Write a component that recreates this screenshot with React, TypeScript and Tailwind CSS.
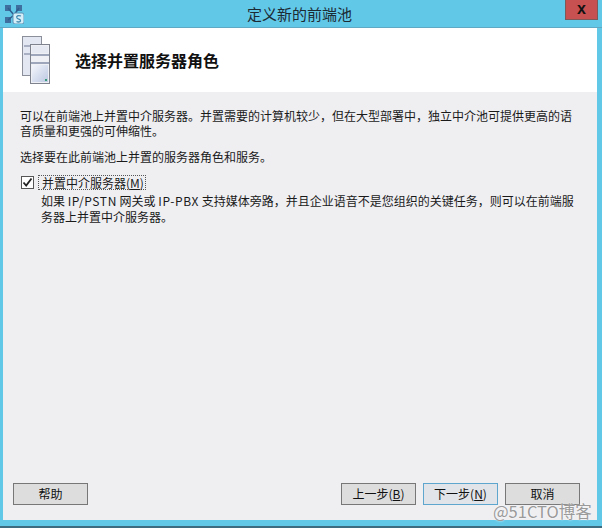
const font = { fontFamily: '"Noto Sans CJK SC", "Liberation Sans", sans-serif' };

const AppIcon = () => (
  <svg width="20" height="20" viewBox="0 0 20 20">
    <rect x="1" y="1" width="6" height="6" fill="#3f6f9f" />
    <rect x="12" y="1" width="6" height="6" fill="#3f6f9f" />
    <rect x="1" y="13" width="6" height="6" fill="#3f6f9f" />
    <path d="M4 4 L10 11 L15 4 M4 16 L10 11" stroke="#2f5f8f" strokeWidth="1.5" fill="none" />
    <rect x="9" y="9" width="11" height="11" rx="2" fill="#d5eef8" stroke="#5a93b5" />
    <path d="M17 12 C14 11 12 12 13 14 C14 15.5 17 15 16.5 17 C16 18.5 13.5 18 12.5 17.5" stroke="#3c86ae" strokeWidth="1.3" fill="none" />
  </svg>
);

const ServerIcon = () => (
  <svg width="30" height="49" viewBox="0 0 30 49">
    <defs>
      <linearGradient id="panel" x1="0" y1="0" x2="1" y2="1">
        <stop offset="0" stopColor="#f4f6fb" />
        <stop offset="1" stopColor="#bcc8e2" />
      </linearGradient>
    </defs>
    <rect x="0.5" y="0.5" width="19" height="39" fill="#e3e7f1" stroke="#8a8f9a" />
    <rect x="2" y="9" width="16" height="2" fill="#a9b0c4" />
    <rect x="2" y="17" width="16" height="2" fill="#a9b0c4" />
    <rect x="8.5" y="8.5" width="19" height="39" fill="#eef0f6" stroke="#7d828c" />
    <rect x="10" y="10" width="16" height="7" fill="#e6e9f2" />
    <rect x="9" y="18" width="18" height="2" fill="#9ea6bb" />
    <rect x="9" y="26" width="18" height="2" fill="#9ea6bb" />
    <rect x="10" y="29" width="16" height="17" fill="url(#panel)" />
    <rect x="23" y="43" width="2" height="2" fill="#3a9a7c" />
  </svg>
);

const Button = ({ label, hot, primary }: { label: string; hot?: string; primary?: boolean }) => (
  <button
    className={`w-[75px] h-[22px] flex items-center justify-center text-[12px] text-[#111] border ${
      primary ? "border-[#5fa6cf] bg-[#e1e4e8]" : "border-[#777] bg-[#dddddd]"
    }`}
  >
    {label}
    {hot && (
      <span>
        (<span className="underline">{hot}</span>)
      </span>
    )}
  </button>
);

export default function App() {
  return (
    <div className="relative w-[602px] h-[528px] overflow-hidden flex flex-col bg-[#62c8e8]" style={font}>
      {/* title bar */}
      <div className="relative h-[28px] shrink-0 flex items-center justify-center border-b border-[#5fa9c4]">
        <div className="absolute left-[4px] top-[4px]">
          <AppIcon />
        </div>
        <span className="text-[15px] leading-[20px] text-[#1c2a33] mr-[3px]">定义新的前端池</span>
        <div className="absolute left-[565px] top-0 w-[33px] h-[20px] bg-[#c75050] border border-[#7d5a5a] border-t-0 flex items-center justify-center">
          <span className="text-[16px] font-bold text-[#111] leading-none mb-[2px]" style={{ fontFamily: '"Liberation Sans", sans-serif' }}>
            x
          </span>
        </div>
      </div>

      {/* client area */}
      <div className="ml-[3px] mr-[5px] h-[492px] shrink-0 flex flex-col bg-[#efeff2] text-[#1a1a1a]">
        <div className="h-[64px] shrink-0 bg-white flex items-center pl-[19px]">
          <ServerIcon />
          <h1 className="ml-[23px] text-[16px] font-bold text-[#111]">选择并置服务器角色</h1>
        </div>

        <div className="flex-1 pl-[17px] pr-[20px] pt-[16px] text-[12px] leading-[15px]">
          <p>可以在前端池上并置中介服务器。并置需要的计算机较少，但在大型部署中，独立中介池可提供更高的语音质量和更强的可伸缩性。</p>
          <p className="mt-[11px]">选择要在此前端池上并置的服务器角色和服务。</p>
          <div className="mt-[11px] flex items-center h-[15px]">
            <div className="ml-[1px] w-[13px] h-[13px] bg-white border border-[#555] flex items-center justify-center">
              <svg width="11" height="11" viewBox="0 0 11 11">
                <path d="M1.5 5.5 L4.2 8.5 L9.5 1.5" stroke="#222" strokeWidth="1.8" fill="none" />
              </svg>
            </div>
            <span className="ml-[4px] pl-[3px] pr-[1px] border border-dotted border-[#555] leading-[13px]">
              并置中介服务器(<span className="underline">M</span>)
            </span>
          </div>
          <p className="ml-[21px] mt-[3px] leading-[16px]">
            如果 <span className="tracking-[0.6px]">IP/PSTN</span> 网关或 <span className="tracking-[0.6px]">IP-PBX</span> 支持媒体旁路，并且企业语音不是您组织的关键任务，则可以在前端服务器上并置中介服务器。
          </p>
        </div>

        <div className="h-[37px] shrink-0 flex pl-[10px] pr-[17px]">
          <Button label="帮助" />
          <div className="ml-auto flex gap-[7px]">
            <Button label="上一步" hot="B" />
            <Button label="下一步" hot="N" primary />
            <Button label="取消" />
          </div>
        </div>
      </div>

      <div className="mt-[6px] h-[2px] bg-[#3d6c80]" />

      {/* watermark */}
      <span className="absolute left-[493px] top-[501px] text-[16.5px] text-[#9a9a9a] leading-[20px] [text-shadow:0_0_2px_#fff]">
        @51CTO博客
      </span>
    </div>
  );
}
